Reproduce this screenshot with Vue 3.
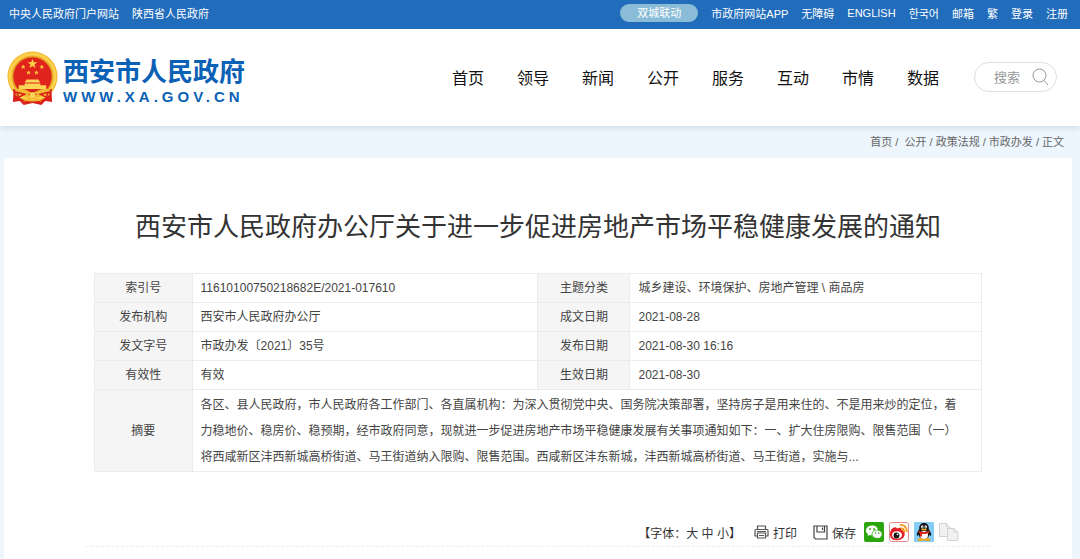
<script setup>
import { ref } from 'vue'

const leftLinks = ['中央人民政府门户网站', '陕西省人民政府']
const rightLinks = ['市政府网站APP', '无障碍', 'ENGLISH', '한국어', '邮箱', '繁', '登录', '注册']
const nav = ['首页', '领导', '新闻', '公开', '服务', '互动', '市情', '数据']
const rows = [
  ['索引号', '11610100750218682E/2021-017610', '主题分类', '城乡建设、环境保护、房地产管理 \\ 商品房'],
  ['发布机构', '西安市人民政府办公厅', '成文日期', '2021-08-28'],
  ['发文字号', '市政办发〔2021〕35号', '发布日期', '2021-08-30 16:16'],
  ['有效性', '有效', '生效日期', '2021-08-30'],
]
const keyword = ref('')
</script>

<template>
  <div class="page">
    <div class="topbar">
      <div class="links">
        <a v-for="l in leftLinks" :key="l" href="#">{{ l }}</a>
      </div>
      <div class="links">
        <a class="pill" href="#">双城联动</a>
        <a v-for="l in rightLinks" :key="l" href="#">{{ l }}</a>
      </div>
    </div>

    <header class="header">
      <a class="brand" href="#">
        <svg class="emblem" viewBox="0 0 52 56" aria-hidden="true">
          <path d="M7 36 L6 52 L13 51 L17 55 L26 53 L35 55 L39 51 L46 52 L45 36Z" fill="#d9201a" />
          <circle cx="26" cy="26" r="25.500" fill="#f0b22a" />
          <circle cx="26" cy="26" r="23" fill="none" stroke="#fad04c" stroke-width="3" />
          <circle cx="26" cy="26" r="20" fill="#e0231c" stroke="#dc961c" stroke-width="1" />
          <path d="M26 8l1.300 3.500h3.700l-3 2.300 1.100 3.600-3.100-2.100-3.100 2.100 1.100-3.600-3-2.300h3.700z" fill="#fbd34b" />
          <path d="M16.500 13.500l.7 1.700h1.800l-1.400 1.200.5 1.800-1.600-1-1.600 1 .5-1.800-1.400-1.200h1.800zM35.500 13.500l.7 1.700h1.800l-1.400 1.200.5 1.800-1.600-1-1.600 1 .5-1.800-1.400-1.200h1.800zM22 19.500l.7 1.700h1.800l-1.400 1.200.5 1.800-1.600-1-1.600 1 .5-1.800-1.400-1.200h1.800zM30 19.500l.7 1.700h1.800l-1.400 1.200.5 1.800-1.600-1-1.600 1 .5-1.800-1.400-1.200h1.800z" fill="#f6bd3b" />
          <path d="M20 29h12l2 3H18zM18 33h16v2H18zM12 35h28v4H12z" fill="#fbd555" />
          <path d="M6 39h40l-1 5H7z" fill="#d9201a" />
          <path d="M8 39 Q17 37 22 41 L26 43 L30 41 Q36 37 44 39 L42 45 Q34 43 30 47 L36 52 L26 49 L16 52 L22 47 Q16 43 10 45Z" fill="#f4bb34" />
          <path d="M10 42l8 2-6 3zM42 42l-8 2 6 3zM22 44l4 2 4-2" fill="none" stroke="#d9201a" stroke-width="1.500" />
          <circle cx="26" cy="45" r="3" fill="#fbd555" />
        </svg>
        <span class="names">
          <span class="name">西安市人民政府</span>
          <span class="domain">WWW.XA.GOV.CN</span>
        </span>
      </a>
      <div class="menu">
        <nav class="nav">
          <a v-for="n in nav" :key="n" href="#">{{ n }}</a>
        </nav>
        <form class="search" @submit.prevent>
          <input v-model="keyword" type="text" placeholder="搜索" aria-label="搜索" />
          <button type="submit" aria-label="搜索">
            <svg viewBox="0 0 18 18" width="18" height="18" fill="none" stroke="#999" stroke-width="1">
              <circle cx="8.500" cy="7.500" r="6.500" />
              <path d="M13 12.500l4 4.500" />
            </svg>
          </button>
        </form>
      </div>
    </header>

    <div class="crumbs">
      <a href="#">首页</a> /&nbsp; <a href="#">公开</a> / <a href="#">政策法规</a> / <a href="#">市政办发</a> / <span>正文</span>
    </div>

    <main class="card">
      <h1>西安市人民政府办公厅关于进一步促进房地产市场平稳健康发展的通知</h1>
      <table>
        <colgroup>
          <col class="c1" /><col class="c2" /><col class="c3" /><col />
        </colgroup>
        <tbody>
          <tr v-for="r in rows" :key="r[0]">
            <th scope="row">{{ r[0] }}</th>
            <td>{{ r[1] }}</td>
            <th scope="row">{{ r[2] }}</th>
            <td>{{ r[3] }}</td>
          </tr>
          <tr>
            <th scope="row">摘要</th>
            <td class="summary" colspan="3">各区、县人民政府，市人民政府各工作部门、各直属机构：为深入贯彻党中央、国务院决策部署，坚持房子是用来住的、不是用来炒的定位，着力稳地价、稳房价、稳预期，经市政府同意，现就进一步促进房地产市场平稳健康发展有关事项通知如下：一、扩大住房限购、限售范围（一）将西咸新区沣西新城高桥街道、马王街道纳入限购、限售范围。西咸新区沣东新城，沣西新城高桥街道、马王街道，实施与...</td>
          </tr>
        </tbody>
      </table>

      <div class="tools">
        <div class="sizes">【字体：<button type="button">大</button> <button type="button">中</button> <button type="button">小</button>】</div>
        <button class="tool" type="button">
          <svg viewBox="0 0 15 14" width="15" height="14" fill="none" stroke="#555" stroke-width="1.200">
            <path d="M3.500 4V1h8v3M3.500 11H1V5.500Q1 4.500 2 4.500h11q1 0 1 1V11h-2.500" />
            <path d="M3.500 8h8v5h-8zM5 10.500h5M3 6.500h9" />
          </svg>
          打印
        </button>
        <button class="tool save" type="button">
          <svg viewBox="0 0 15 15" width="15" height="15" fill="none" stroke="#444" stroke-width="1.200">
            <path d="M1 1h13v13H2.500L1 12.500z" />
            <path d="M4 1v6h7.500V1M9.500 2.500v2.500" />
          </svg>
          保存
        </button>
        <div class="share">
          <a href="#" aria-label="微信">
            <svg viewBox="0 0 20 20" width="20" height="20">
              <rect width="20" height="20" rx="2" fill="#2ba50e" />
              <path d="M8 3.500c-3.500 0-6 2.200-6 4.900 0 1.600.8 2.900 2.100 3.800L3.600 14l2.200-1.100c.7.2 1.500.3 2.200.3 3.500 0 6-2.200 6-4.900S11.500 3.500 8 3.500z" fill="#fff" />
              <path d="M13 8c-2.900 0-5 1.800-5 4.200s2.200 4.200 5 4.200c.6 0 1.200-.1 1.700-.3l1.900 1-.4-1.700c1.200-.8 1.900-1.900 1.900-3.200C18.100 9.800 15.800 8 13 8z" fill="#fff" stroke="#2ba50e" stroke-width=".8" />
              <g fill="#2ba50e"><circle cx="6" cy="7" r=".9" /><circle cx="10" cy="7" r=".9" /><circle cx="11.500" cy="11" r=".8" /><circle cx="14.800" cy="11" r=".8" /></g>
            </svg>
          </a>
          <a href="#" aria-label="微博">
            <svg viewBox="0 0 20 20" width="20" height="20">
              <rect x=".5" y=".5" width="19" height="19" rx="2" fill="#fff" stroke="#e58a8a" />
              <path d="M2 8c2-3 5-3.500 6-1.500 3-1.500 5-.5 4.500 1.500 4 1 4 5.500 1.500 8-3 3-9.500 3-12 0-1.500-2-1.500-5 0-8z" fill="#df2029" />
              <ellipse cx="8" cy="13" rx="5" ry="3.800" fill="#fff" />
              <circle cx="7.500" cy="13.500" r="2.900" fill="#111" />
              <circle cx="8.500" cy="12.300" r=".9" fill="#fff" />
              <path d="M11.500 6.500q3.500-.5 4 4M11 3q6.500-.5 7 7" fill="none" stroke="#f59a1b" stroke-width="1.800" />
            </svg>
          </a>
          <a href="#" aria-label="QQ">
            <svg viewBox="0 0 20 20" width="20" height="20">
              <rect width="20" height="20" rx="1" fill="#86ccf4" />
              <path d="M10 1C6.500 1 5 3.500 5.200 7.500 3.500 9.500 2.300 12 3 14c.6 0 1.200-.6 1.700-1.200.3 1.200.8 2.200 1.500 3h7.600c.7-.8 1.200-1.800 1.500-3 .5.600 1.100 1.200 1.700 1.200.7-2-.5-4.500-2.200-6.500C15 3.500 13.500 1 10 1z" fill="#161616" />
              <ellipse cx="10" cy="13" rx="4" ry="4" fill="#fff" />
              <ellipse cx="8.300" cy="4.800" rx="1.200" ry="1.600" fill="#fff" />
              <ellipse cx="11.700" cy="4.800" rx="1.200" ry="1.600" fill="#fff" />
              <circle cx="8.600" cy="5" r=".5" fill="#111" /><circle cx="11.400" cy="5" r=".5" fill="#111" />
              <ellipse cx="10" cy="7.600" rx="3" ry="1" fill="#f6a51c" />
              <path d="M5 8.800q5 2.500 10 0l.5 2q-5.500 2.500-11 0zM6 11l2 .5v3H6z" fill="#dd2721" />
              <ellipse cx="6.800" cy="17.500" rx="3" ry="1.500" fill="#f6a51c" />
              <ellipse cx="13.200" cy="17.500" rx="3" ry="1.500" fill="#f6a51c" />
            </svg>
          </a>
          <a href="#" aria-label="复制">
            <svg viewBox="0 0 20 20" width="20" height="20" fill="#f1f1f1" stroke="#d2d2d2">
              <path d="M.5 1.500h7l3.500 3.500v9.500H.5z" />
              <path d="M7.500 1.500V5H11" />
              <path d="M8.500 6.500h6.500l4 3.500v8.500H8.500z" />
              <path d="M15 6.500V10h4" />
            </svg>
          </a>
        </div>
      </div>
    </main>
  </div>
</template>

<style>
html,
body {
  margin: 0;
  background: #edf5fd;
}
</style>

<style scoped>
* {
  box-sizing: border-box;
}
.page {
  min-height: 100vh;
  display: flex;
  flex-direction: column;
  background: #edf5fd;
  font-family: "Liberation Sans", "Noto Sans CJK SC", "Noto Sans CJK KR", sans-serif;
  font-size: 12px;
  color: #444;
}
a {
  color: inherit;
  text-decoration: none;
}
button {
  border: 0;
  padding: 0;
  background: none;
  font: inherit;
  color: inherit;
}
svg {
  display: block;
}
.topbar {
  display: flex;
  justify-content: space-between;
  align-items: center;
  height: 29px;
  padding: 0 12px 3px 9px;
  background: #226dbb;
  color: #fff;
  font-size: 11px;
}
.links {
  display: flex;
  align-items: center;
  gap: 13px;
  white-space: nowrap;
}
.pill {
  padding: 0 17px;
  line-height: 18px;
  border-radius: 9px;
  background: #8abcd8;
}
.header {
  display: flex;
  justify-content: space-between;
  height: 97px;
  padding: 0 23px 0 7px;
  background: #fff;
  box-shadow: 0 4px 4px -1px #d5e3ee;
}
.brand {
  display: flex;
  gap: 5px;
  padding-top: 22px;
  color: #0a61b5;
  white-space: nowrap;
}
.emblem {
  width: 51px;
  height: 55px;
}
.names {
  display: flex;
  flex-direction: column;
  padding-top: 5px;
}
.name {
  font-size: 26px;
  line-height: 32px;
  font-weight: 700;
}
.domain {
  font-size: 15px;
  line-height: 17px;
  font-weight: 700;
  letter-spacing: 4px;
}
.menu {
  display: flex;
  align-items: center;
  gap: 35px;
  height: 96px;
}
.nav {
  display: flex;
  gap: 33px;
  font-size: 16px;
  color: #111;
  white-space: nowrap;
}
.search {
  display: flex;
  align-items: center;
  width: 83px;
  height: 30px;
  padding: 0 7px 0 19px;
  border: 1px solid #ddd;
  border-radius: 15px;
}
.search input {
  flex: 1;
  min-width: 0;
  padding: 0;
  border: 0;
  outline: 0;
  background: none;
  font: inherit;
  font-size: 13px;
}
.search input::placeholder {
  color: #999;
}
.crumbs {
  padding-right: 16px;
  font-size: 11px;
  line-height: 32px;
  text-align: right;
  color: #666;
}
.card {
  flex: 1;
  margin: 0 8px 0 4px;
  padding: 50px 90px 0;
  background: #fff;
}
h1 {
  margin: 0 0 26px;
  font-size: 26px;
  line-height: 39px;
  font-weight: 400;
  text-align: center;
  color: #333;
}
table {
  width: 100%;
  table-layout: fixed;
  border-collapse: collapse;
}
.c1 {
  width: 11%;
}
.c2 {
  width: 39%;
}
.c3 {
  width: 92px;
}
th,
td {
  height: 29px;
  padding: 0 8px;
  border: 1px solid #ebebeb;
  font-weight: 400;
  line-height: 26px;
  text-align: left;
}
th {
  background: #f5f5f5;
  text-align: center;
}
.summary {
  padding: 2px 16px 1px 8px;
}
.tools {
  display: flex;
  justify-content: flex-end;
  align-items: center;
  margin: 50px -8px 0;
  padding: 0 31px 4px 0;
  border-bottom: 1px dashed #eee;
  color: #333;
}
.sizes {
  margin-right: 13px;
}
.tool {
  display: flex;
  align-items: center;
  gap: 4px;
  margin-right: 16px;
}
.save {
  margin-right: 8px;
}
.share {
  display: flex;
  gap: 5px;
}
</style>
